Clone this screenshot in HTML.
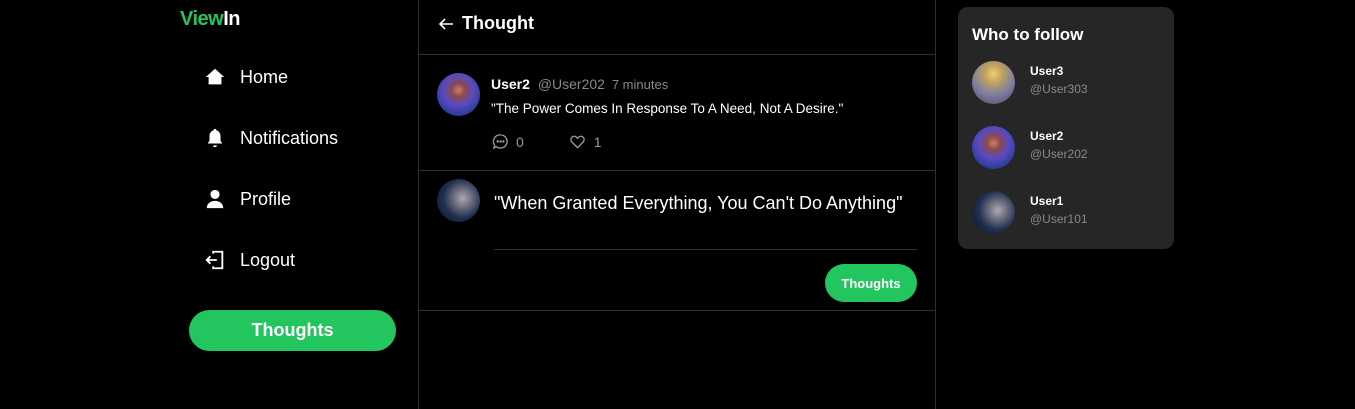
<!DOCTYPE html>
<html><head><meta charset="utf-8"><style>
*{margin:0;padding:0;box-sizing:border-box}
body{width:1355px;height:409px;background:#000;color:#fff;font-family:"Liberation Sans",sans-serif;position:relative;overflow:hidden}
.a{position:absolute}
.logo{left:180px;top:8px;font-size:20px;font-weight:bold;letter-spacing:-0.5px}
.nav{left:204px;font-size:18px;display:flex;align-items:center}
.nav svg{width:22px;height:22px;margin-right:14px}
.btn{background:#22c55e;color:#fff;font-weight:bold;border-radius:22px;display:flex;align-items:center;justify-content:center}
.vl{width:1px;background:#2f2f2f;top:0;height:409px}
.hl{height:1px;background:#2f2f2f;left:419px;width:516px}
.av{border-radius:50%}
.g1{background:radial-gradient(circle at 50% 40%,#d08060 0,#8a4a50 20%,#5a4ac0 45%,#3040a0 70%,#202060 100%)}
.g2{background:radial-gradient(circle at 60% 45%,#b0a8b0 0,#707080 25%,#203050 55%,#0a1020 100%)}
.g3{background:radial-gradient(circle at 50% 30%,#f0d070 0,#c0a060 25%,#8080a0 55%,#504870 100%)}
.gr{color:#8a8a8a}
</style></head><body>
<div class="a logo"><span style="color:#22c55e">View</span>In</div>

<div class="a nav" style="top:66px"><svg viewBox="0 0 24 24"><path d="M12 3L2 12h3v8h14v-8h3z" fill="#fff"/></svg>Home</div>
<div class="a nav" style="top:127px"><svg viewBox="0 0 24 24"><path d="M12 2c-1 0-1.5.7-1.5 1.5C7.5 4.3 6 7 6 10v5l-2 3h16l-2-3v-5c0-3-1.5-5.7-4.5-6.5C13.5 2.7 13 2 12 2zM10 20a2 2 0 004 0z" fill="#fff"/></svg>Notifications</div>
<div class="a nav" style="top:188px"><svg viewBox="0 0 24 24"><circle cx="12" cy="7" r="5" fill="#fff"/><path d="M3 22c0-5 4-8 9-8s9 3 9 8z" fill="#fff"/></svg>Profile</div>
<div class="a nav" style="top:249px"><svg viewBox="0 0 24 24" fill="none" stroke="#fff" stroke-width="2"><path d="M10 5V3h10v18H10v-2"/><path d="M3 12h11M7 8l-4 4 4 4"/></svg>Logout</div>
<div class="a btn" style="left:189px;top:310px;width:207px;height:41px;font-size:18px">Thoughts</div>

<div class="a vl" style="left:418px"></div>
<div class="a vl" style="left:935px"></div>

<div class="a" style="left:438px;top:13px;font-size:18px;font-weight:bold;display:flex;align-items:center"><svg width="16" height="16" viewBox="0 0 16 16" fill="none" stroke="#fff" stroke-width="1.6" style="margin-right:8px"><path d="M15 8H2M7 3L2 8l5 5"/></svg>Thought</div>
<div class="a hl" style="top:54px"></div>

<div class="a av g1" style="left:437px;top:73px;width:43px;height:43px"></div>
<div class="a" style="left:491px;top:76px;font-size:14px"><b>User2</b> <span class="gr" style="margin-left:4px">@User202</span> <span class="gr" style="margin-left:3px;font-size:13px">7 minutes</span></div>
<div class="a" style="left:491px;top:101px;font-size:13.5px">"The Power Comes In Response To A Need, Not A Desire."</div>
<div class="a gr" style="left:492px;top:133px;font-size:14px;display:flex;align-items:center;color:#999">
<svg width="17" height="17" viewBox="0 0 18 18" fill="none" stroke="#999" stroke-width="1.4"><path d="M9 2a7 7 0 11-4.5 12.4L2 16l.8-3A7 7 0 019 2z"/><circle cx="6" cy="9" r=".6" fill="#999"/><circle cx="9" cy="9" r=".6" fill="#999"/><circle cx="12" cy="9" r=".6" fill="#999"/></svg>
<span style="margin-left:7px">0</span>
<svg width="17" height="17" viewBox="0 0 18 18" fill="none" stroke="#999" stroke-width="1.4" style="margin-left:45px"><path d="M9 15.5L3 9.5a3.5 3.5 0 015-5l1 1 1-1a3.5 3.5 0 015 5z"/></svg>
<span style="margin-left:8px">1</span></div>
<div class="a hl" style="top:170px"></div>

<div class="a av g2" style="left:437px;top:179px;width:43px;height:43px"></div>
<div class="a" style="left:494px;top:193px;font-size:18px">"When Granted Everything, You Can't Do Anything"</div>
<div class="a" style="left:494px;top:249px;width:423px;height:1px;background:#2f2f2f"></div>
<div class="a btn" style="left:825px;top:264px;width:92px;height:38px;font-size:13px;border-radius:19px">Thoughts</div>
<div class="a hl" style="top:310px"></div>

<div class="a" style="left:958px;top:7px;width:216px;height:242px;background:#262626;border-radius:10px"></div>
<div class="a" style="left:972px;top:25px;font-size:17px;font-weight:bold">Who to follow</div>
<div class="a av g3" style="left:972px;top:61px;width:43px;height:43px"></div>
<div class="a" style="left:1030px;top:64px;font-size:12px;font-weight:bold">User3</div>
<div class="a gr" style="left:1030px;top:82px;font-size:12px">@User303</div>
<div class="a av g1" style="left:972px;top:126px;width:43px;height:43px"></div>
<div class="a" style="left:1030px;top:129px;font-size:12px;font-weight:bold">User2</div>
<div class="a gr" style="left:1030px;top:147px;font-size:12px">@User202</div>
<div class="a av g2" style="left:972px;top:191px;width:43px;height:43px"></div>
<div class="a" style="left:1030px;top:194px;font-size:12px;font-weight:bold">User1</div>
<div class="a gr" style="left:1030px;top:212px;font-size:12px">@User101</div>
</body></html>
